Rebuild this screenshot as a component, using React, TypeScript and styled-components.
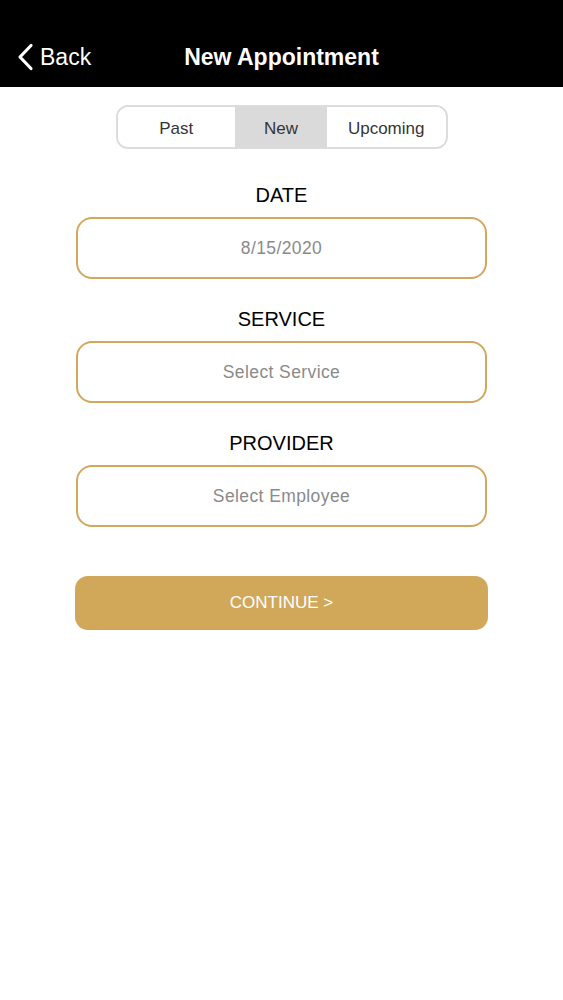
import React, { useState } from 'react';
import styled, { createGlobalStyle } from 'styled-components';

const GlobalStyle = createGlobalStyle`
    body {
        margin: 0;
        background: #ffffff;
        font-family: "Liberation Sans", Arial, sans-serif;
    }
`;

const Page = styled.div`
    width: 563px;
    min-height: 1000px;
    background: #ffffff;
`;

const Header = styled.div`
    height: 87px;
    background: #000000;
    display: grid;
    grid-template-columns: 1fr auto 1fr;
    align-items: end;
    padding-bottom: 16px;
    box-sizing: border-box;
`;

const BackButton = styled.button`
    display: flex;
    align-items: center;
    gap: 6px;
    background: none;
    border: none;
    color: #ffffff;
    font-family: "Liberation Sans", Arial, sans-serif;
    font-size: 23px;
    padding: 0 0 0 17px;
    cursor: pointer;
    justify-self: start;

    &:focus {
        outline: none;
    }
`;

const Title = styled.div`
    color: #ffffff;
    font-size: 23px;
    font-weight: bold;
    line-height: 28px;
`;

const Body = styled.div`
    display: flex;
    flex-direction: column;
    align-items: center;
    padding-top: 18px;
`;

const Segments = styled.div`
    display: flex;
    width: 332px;
    height: 44px;
    border: 2px solid #dcdcdc;
    border-radius: 12px;
    overflow: hidden;
    box-sizing: border-box;
    margin-bottom: 34px;
`;

const Segment = styled.button<{ $active?: boolean; $w: number }>`
    width: ${p => p.$w}px;
    border: none;
    background: ${p => (p.$active ? '#dadada' : '#ffffff')};
    color: #353535;
    font-family: "Liberation Sans", Arial, sans-serif;
    font-size: 17px;
    padding: 3px 0 0;
    cursor: pointer;

    &:focus {
        outline: none;
    }
`;

const Field = styled.div`
    display: flex;
    flex-direction: column;
    align-items: center;
    width: 411px;
    margin-bottom: 28px;
`;

const Label = styled.div`
    font-size: 20px;
    color: #000000;
    line-height: 24px;
    margin-bottom: 10px;
`;

const InputBox = styled.div`
    width: 100%;
    height: 62px;
    border: 2px solid #d2a75e;
    border-radius: 16px;
    box-sizing: border-box;
    display: flex;
    align-items: center;
    justify-content: center;
    font-size: 17.5px;
    color: #8a8a8a;
    letter-spacing: 0.4px;
`;

const ContinueButton = styled.button`
    margin-top: 21px;
    width: 413px;
    height: 54px;
    background: #d1a85a;
    border: none;
    border-radius: 13px;
    color: #ffffff;
    font-family: "Liberation Sans", Arial, sans-serif;
    font-size: 17px;
    cursor: pointer;

    &:focus {
        outline: none;
    }
`;

const Chevron = () => (
    <svg width="17" height="28" viewBox="0 0 17 28">
        <path d="M14 2.5 L3 14 L14 25.5" fill="none" stroke="#ffffff" strokeWidth="3.2" strokeLinecap="round" strokeLinejoin="round" />
    </svg>
);

const tabs = [
    { name: 'Past', w: 119 },
    { name: 'New', w: 93 },
    { name: 'Upcoming', w: 120 },
];

const App = () => {
    const [tab, setTab] = useState('New');

    return (
        <Page>
            <GlobalStyle />
            <Header>
                <BackButton>
                    <Chevron />
                    Back
                </BackButton>
                <Title>New Appointment</Title>
                <div />
            </Header>
            <Body>
                <Segments>
                    {tabs.map(t => (
                        <Segment key={t.name} $w={t.w} $active={tab === t.name} onClick={() => setTab(t.name)}>
                            {t.name}
                        </Segment>
                    ))}
                </Segments>
                <Field>
                    <Label>DATE</Label>
                    <InputBox>8/15/2020</InputBox>
                </Field>
                <Field>
                    <Label>SERVICE</Label>
                    <InputBox>Select Service</InputBox>
                </Field>
                <Field>
                    <Label>PROVIDER</Label>
                    <InputBox>Select Employee</InputBox>
                </Field>
                <ContinueButton>CONTINUE &gt;</ContinueButton>
            </Body>
        </Page>
    );
};

export default App;
